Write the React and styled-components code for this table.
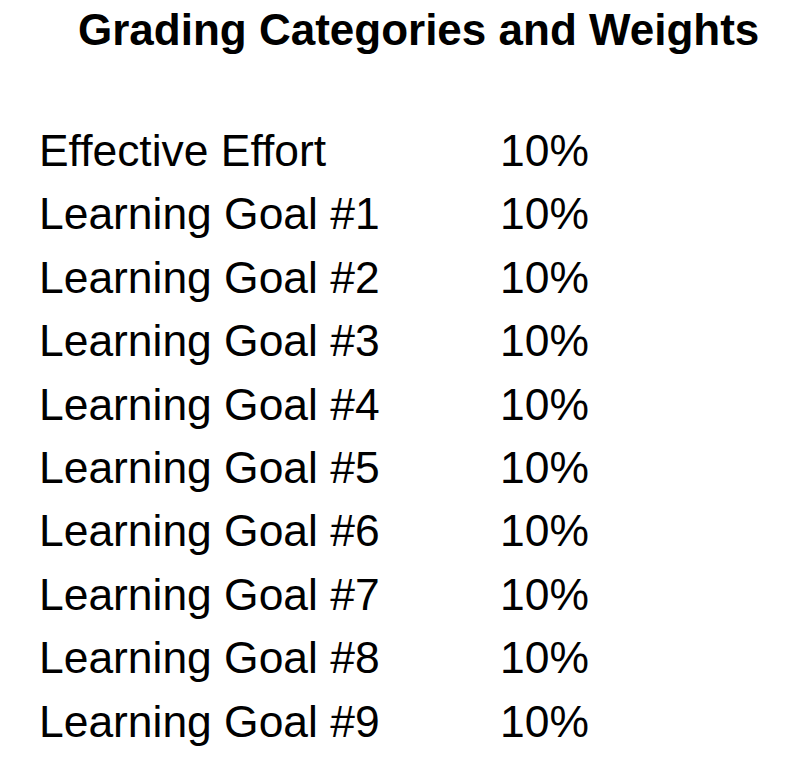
import React from 'react'
import styled, { createGlobalStyle } from 'styled-components'

const GlobalStyle = createGlobalStyle`
  body {
    margin: 0;
    background: #ffffff;
  }
`

const categories = [
  'Effective Effort',
  'Learning Goal #1',
  'Learning Goal #2',
  'Learning Goal #3',
  'Learning Goal #4',
  'Learning Goal #5',
  'Learning Goal #6',
  'Learning Goal #7',
  'Learning Goal #8',
  'Learning Goal #9',
]

export default function App() {
  return (
    <>
      <GlobalStyle />
      <Page>
        <Title>Grading Categories and Weights</Title>
        <Table>
          {categories.map((name) => (
            <Row key={name}>
              <Name>{name}</Name>
              <Weight>10%</Weight>
            </Row>
          ))}
        </Table>
      </Page>
    </>
  )
}

const Page = styled.div`
  width: 788px;
  height: 768px;
  overflow: hidden;
  padding: 5px 0 0 39px;
  box-sizing: border-box;
  font-family: "Liberation Sans", Arial, sans-serif;
  color: #000;
`

const Title = styled.h1`
  margin: 0 0 0 39px;
  font-size: 44px;
  font-weight: 700;
  line-height: 50px;
  white-space: nowrap;
`

const Table = styled.div`
  margin-top: 64px;
  display: flex;
  flex-direction: column;
`

const Row = styled.div`
  display: grid;
  grid-template-columns: 461px auto;
  height: 63.4px;
  line-height: 63.4px;
  font-size: 44.4px;
`

const Name = styled.span`
  white-space: nowrap;
`

const Weight = styled.span`
  white-space: nowrap;
`
